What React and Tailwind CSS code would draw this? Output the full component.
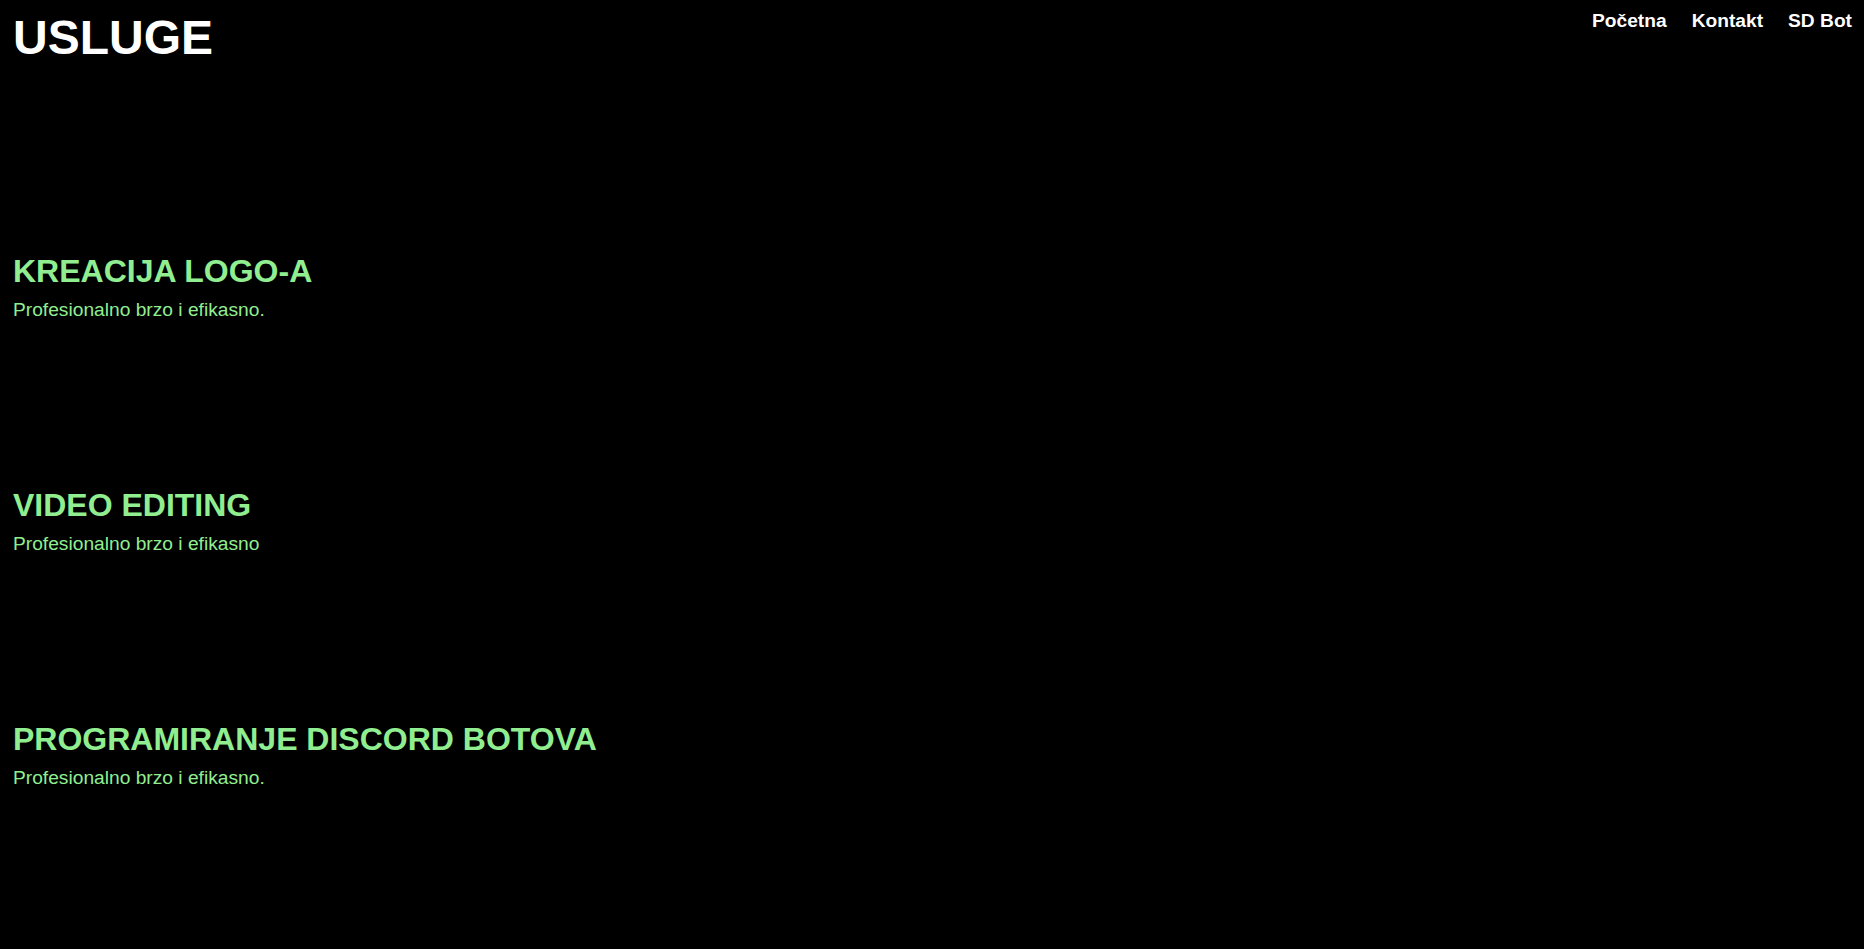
export default function App() {
  const services = [
    { title: "KREACIJA LOGO-A", text: "Profesionalno brzo i efikasno." },
    { title: "VIDEO EDITING", text: "Profesionalno brzo i efikasno" },
    { title: "PROGRAMIRANJE DISCORD BOTOVA", text: "Profesionalno brzo i efikasno." },
  ];
  return (
    <div
      className="min-h-[949px] w-full bg-black text-white"
      style={{ fontFamily: '"Liberation Sans", Arial, sans-serif' }}
    >
      <header className="flex items-start justify-between pl-[13px] pr-[12px] pt-[10px]">
        <h1 className="text-[48px] font-bold leading-[55px] text-white">USLUGE</h1>
        <nav className="flex gap-[25px] text-[19.2px] font-bold leading-[22px]">
          <a href="#" className="text-white">Početna</a>
          <a href="#" className="text-white">Kontakt</a>
          <a href="#" className="text-white">SD Bot</a>
        </nav>
      </header>
      <main className="mt-[188px] flex flex-col gap-[166px] pl-[13px] text-[#90ee90]">
        {services.map((s) => (
          <section key={s.title} className="flex flex-col gap-[9px]">
            <h2 className="text-[32px] font-bold leading-[37px]">{s.title}</h2>
            <p className="text-[19.2px] leading-[22px]">{s.text}</p>
          </section>
        ))}
      </main>
    </div>
  );
}
